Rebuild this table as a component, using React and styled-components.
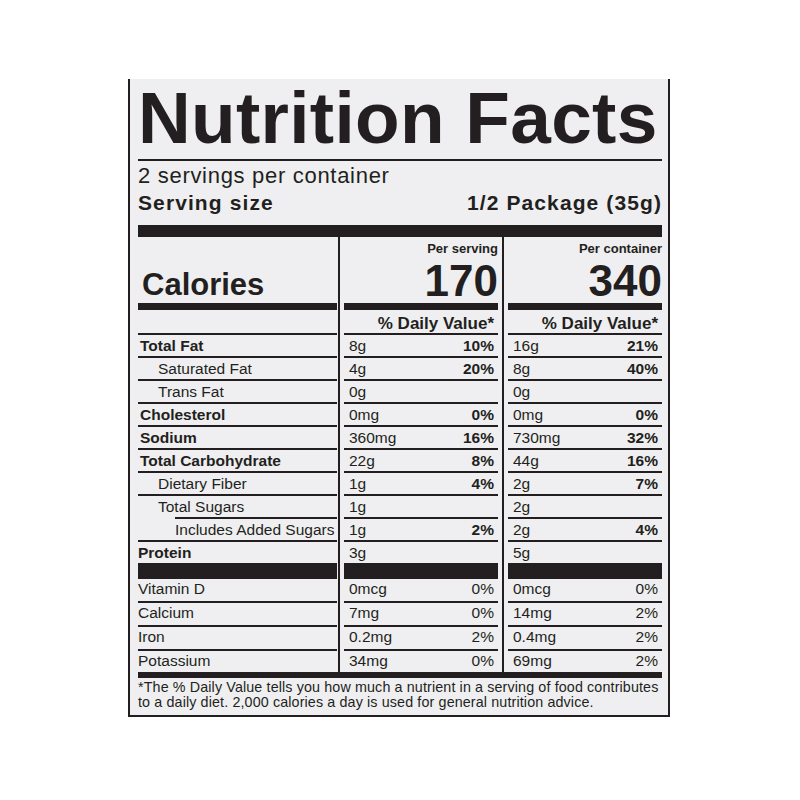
import styled, { createGlobalStyle } from "styled-components";

const ink = "#231f20";

const GlobalStyle = createGlobalStyle`
  body {
    margin: 0;
    background: #ffffff;
    color: ${ink};
    font-family: "Liberation Sans", Arial, sans-serif;
  }
`;

const Page = styled.div`
  padding: 79px 0 0 128px;
`;

const Label = styled.div`
  width: 542px;
  box-sizing: border-box;
  background: #efeff1;
  border: 2px solid ${ink};
  border-top: none;
  padding: 2px 6px 5px 8px;
`;

const Title = styled.h1`
  margin: 0;
  font-size: 73px;
  font-weight: 700;
  line-height: 74px;
  letter-spacing: 0.3px;
  white-space: nowrap;
`;

const Rule = styled.div`
  height: 2px;
  margin-top: 4px;
  background: ${ink};
`;

const Servings = styled.div`
  margin-top: 4px;
  font-size: 22px;
  line-height: 22px;
  letter-spacing: 0.7px;
`;

const ServingSize = styled.div`
  display: flex;
  justify-content: space-between;
  margin-top: 5px;
  font-size: 21px;
  font-weight: 700;
  line-height: 22px;
  letter-spacing: 1.1px;
`;

const Bar = styled.div`
  height: ${(p) => p.$h}px;
  margin-top: ${(p) => p.$mt || 0}px;
  background: ${ink};
`;

const Table = styled.div`
  display: grid;
  grid-template-columns: 199px 7px 154px 10px 154px;
  grid-template-rows: 66px 7px 25px repeat(9, 23px) 21px 16px 24px 24px 24px 21px;
`;

const Divider = styled.div`
  grid-row: 1 / -1;
  grid-column: ${(p) => p.$col};
  margin-left: ${(p) => p.$offset}px;
  border-left: 2px solid ${ink};
`;

const CaloriesCell = styled.div`
  display: flex;
  align-items: flex-end;
  padding: 0 0 3px 4px;
  font-size: 31px;
  font-weight: 700;
  line-height: 31px;
`;

const HeadCell = styled.div`
  display: flex;
  flex-direction: column;
  align-items: flex-end;
  justify-content: space-between;
  padding-top: 4px;
`;

const PerLabel = styled.div`
  font-size: 13px;
  font-weight: 700;
  line-height: 15px;
`;

const BigNum = styled.div`
  font-size: 44px;
  font-weight: 700;
  line-height: 44px;
`;

const Cell = styled.div`
  display: flex;
  justify-content: ${(p) => (p.$right ? "flex-end" : "space-between")};
  align-items: ${(p) => (p.$end ? "flex-end" : "flex-start")};
  box-sizing: border-box;
  padding: 0 4px ${(p) => (p.$line ? 2 : 0)}px ${(p) => p.$pad ?? 5}px;
  font-size: ${(p) => p.$size || 15.5}px;
  font-weight: ${(p) => (p.$bold ? 700 : 400)};
  line-height: ${(p) => p.$lh || 21}px;
  white-space: nowrap;
  background: ${(p) =>
    p.$line ? `linear-gradient(${ink}, ${ink}) no-repeat right bottom` : "none"};
  background-size: calc(100% - ${(p) => p.$from || 0}px) 2px;
`;

const Pct = styled.span`
  font-weight: ${(p) => (p.$bold ? 700 : 400)};
`;

const Footnote = styled.p`
  margin: 2px 0 0;
  font-size: 14.3px;
  line-height: 15px;
  letter-spacing: 0.13px;
  white-space: nowrap;
`;

const nutrients = [
  { label: "Total Fat", bold: true, s: ["8g", "10%"], c: ["16g", "21%"] },
  { label: "Saturated Fat", indent: 20, s: ["4g", "20%"], c: ["8g", "40%"] },
  { label: "Trans Fat", indent: 20, s: ["0g", ""], c: ["0g", ""] },
  { label: "Cholesterol", bold: true, s: ["0mg", "0%"], c: ["0mg", "0%"] },
  { label: "Sodium", bold: true, s: ["360mg", "16%"], c: ["730mg", "32%"] },
  { label: "Total Carbohydrate", bold: true, s: ["22g", "8%"], c: ["44g", "16%"] },
  { label: "Dietary Fiber", indent: 20, s: ["1g", "4%"], c: ["2g", "7%"] },
  { label: "Total Sugars", indent: 20, from: 37, s: ["1g", ""], c: ["2g", ""] },
  { label: "Includes Added Sugars", indent: 37, s: ["1g", "2%"], c: ["2g", "4%"] },
  { label: "Protein", bold: true, last: true, s: ["3g", ""], c: ["5g", ""] },
];

const vitamins = [
  { label: "Vitamin D", s: ["0mcg", "0%"], c: ["0mcg", "0%"] },
  { label: "Calcium", s: ["7mg", "0%"], c: ["14mg", "2%"] },
  { label: "Iron", s: ["0.2mg", "2%"], c: ["0.4mg", "2%"] },
  { label: "Potassium", last: true, s: ["34mg", "0%"], c: ["69mg", "2%"] },
];

export default function App() {
  return (
    <Page>
      <GlobalStyle />
      <Label>
        <Title>Nutrition Facts</Title>
        <Rule />
        <Servings>2 servings per container</Servings>
        <ServingSize>
          <span>Serving size</span>
          <span>1/2 Package (35g)</span>
        </ServingSize>
        <Bar $h={12} $mt={11} />

        <Table>
          <Divider $col={2} $offset={1} />
          <Divider $col={4} $offset={4} />

          <CaloriesCell>Calories</CaloriesCell>
          <HeadCell>
            <PerLabel>Per serving</PerLabel>
            <BigNum>170</BigNum>
          </HeadCell>
          <HeadCell>
            <PerLabel>Per container</PerLabel>
            <BigNum>340</BigNum>
          </HeadCell>

          <Bar $h={7} />
          <Bar $h={7} />
          <Bar $h={7} />

          <Cell $line />
          <Cell $line $bold $end $right $size={17} $lh={18}>
            % Daily Value*
          </Cell>
          <Cell $line $bold $end $right $size={17} $lh={18}>
            % Daily Value*
          </Cell>

          {nutrients.map((n) => [
            <Cell
              key={n.label}
              $line={!n.last}
              $bold={n.bold}
              $pad={n.indent ?? (n.last ? 0 : 2)}
              $from={n.from}
            >
              {n.label}
            </Cell>,
            <Cell key={n.label + "-s"} $line={!n.last}>
              <span>{n.s[0]}</span>
              <Pct $bold>{n.s[1]}</Pct>
            </Cell>,
            <Cell key={n.label + "-c"} $line={!n.last}>
              <span>{n.c[0]}</span>
              <Pct $bold>{n.c[1]}</Pct>
            </Cell>,
          ])}

          <Bar $h={16} />
          <Bar $h={16} />
          <Bar $h={16} />

          {vitamins.map((v) => [
            <Cell key={v.label} $line={!v.last} $pad={0} $lh={19}>
              {v.label}
            </Cell>,
            <Cell key={v.label + "-s"} $line={!v.last} $lh={19}>
              <span>{v.s[0]}</span>
              <Pct>{v.s[1]}</Pct>
            </Cell>,
            <Cell key={v.label + "-c"} $line={!v.last} $lh={19}>
              <span>{v.c[0]}</span>
              <Pct>{v.c[1]}</Pct>
            </Cell>,
          ])}
        </Table>

        <Bar $h={6} />
        <Footnote>
          *The % Daily Value tells you how much a nutrient in a serving of food contributes
          <br />
          to a daily diet. 2,000 calories a day is used for general nutrition advice.
        </Footnote>
      </Label>
    </Page>
  );
}
